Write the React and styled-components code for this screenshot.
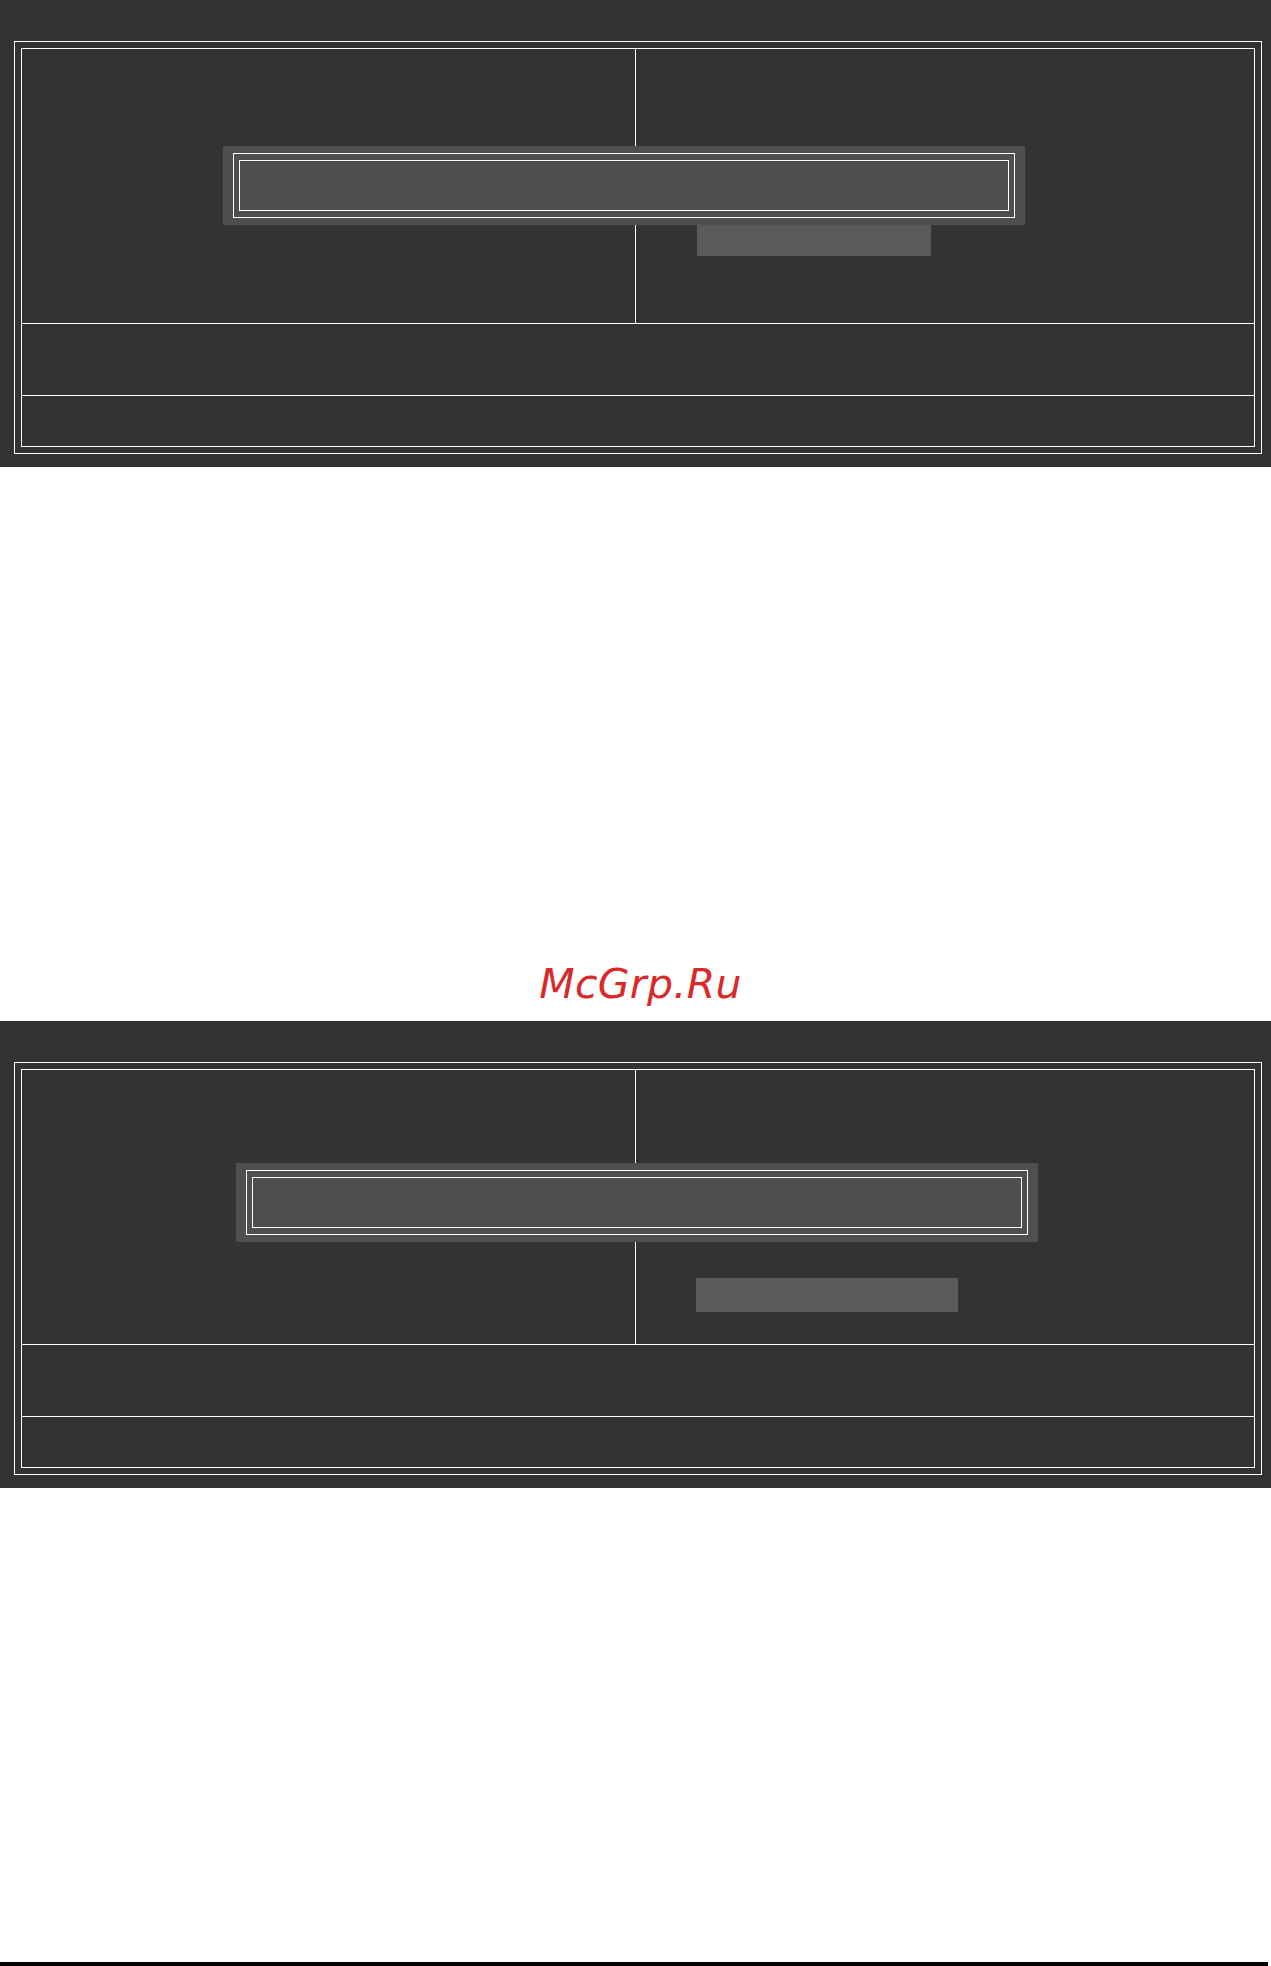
import styled, { createGlobalStyle } from "styled-components";

const Global = createGlobalStyle`
    html, body {
        margin: 0;
        padding: 0;
        background: #ffffff;
    }
    body {
        font-family: "DejaVu Sans", "Liberation Sans", sans-serif;
    }
`

function BiosScreen({ dialogLeft, dialogTop, markLeft, markTop, markWidth, markHeight }) {
    return (
        <Screen>
            <Frame>
                <Inner>
                    <Menu>
                        <Column />
                        <Column right>
                            <Mark $left={markLeft} $top={markTop} $width={markWidth} $height={markHeight} />
                        </Column>
                        <Dialog $left={dialogLeft} $top={dialogTop}>
                            <DialogLine>
                                <DialogField />
                            </DialogLine>
                        </Dialog>
                    </Menu>
                    <Help />
                    <Footer />
                </Inner>
            </Frame>
        </Screen>
    )
}

export default function App() {
    return (
        <>
            <Global />
            <Page>
                <BiosScreen dialogLeft={201} dialogTop={97} markLeft={61} markTop={176} markWidth={234} markHeight={31} />
                <Watermark>
                    <span>McGrp.Ru</span>
                </Watermark>
                <BiosScreen dialogLeft={214} dialogTop={93} markLeft={60} markTop={208} markWidth={262} markHeight={34} />
                <Spacer />
                <Rule />
            </Page>
        </>
    )
}

const Page = styled.div`
    width: 1271px;
    display: flex;
    flex-direction: column;
`

const Screen = styled.div`
    box-sizing: border-box;
    width: 1271px;
    height: 467px;
    background: #333333;
    padding: 41px 9px 13px 14px;
    display: flex;
`

const Frame = styled.div`
    flex: 1;
    border: 1px solid #ffffff;
    padding: 6px;
    display: flex;
`

const Inner = styled.div`
    flex: 1;
    border: 1px solid #ffffff;
    display: flex;
    flex-direction: column;
`

const Menu = styled.div`
    position: relative;
    height: 274px;
    border-bottom: 1px solid #ffffff;
    display: grid;
    grid-template-columns: 614px 1fr;
`

const Column = styled.div`
    border-right: ${(p) => (p.right ? "none" : "1px solid #ffffff")};
    display: flex;
    flex-direction: column;
`

const Mark = styled.div`
    margin-left: ${(p) => p.$left}px;
    margin-top: ${(p) => p.$top}px;
    width: ${(p) => p.$width}px;
    height: ${(p) => p.$height}px;
    background: #5a5a5a;
`

const Dialog = styled.div`
    position: absolute;
    left: ${(p) => p.$left}px;
    top: ${(p) => p.$top}px;
    box-sizing: border-box;
    width: 802px;
    height: 79px;
    background: #4f4f4f;
    padding: 7px 10px;
    display: flex;
`

const DialogLine = styled.div`
    flex: 1;
    border: 1px solid #ffffff;
    padding: 6px 5px 6px 5px;
    display: flex;
`

const DialogField = styled.div`
    flex: 1;
    border: 1px solid #ffffff;
`

const Help = styled.div`
    height: 71px;
    border-bottom: 1px solid #ffffff;
`

const Footer = styled.div`
    flex: 1;
`

const Watermark = styled.div`
    box-sizing: border-box;
    height: 554px;
    display: flex;
    align-items: flex-end;
    justify-content: center;
    padding: 0 0 13px 10px;

    span {
        font-family: "DejaVu Sans", sans-serif;
        font-style: italic;
        font-size: 41px;
        line-height: 47px;
        letter-spacing: 0.3px;
        color: #d92a2a;
    }
`

const Spacer = styled.div`
    height: 474px;
`

const Rule = styled.div`
    height: 4px;
    width: 1268px;
    background: #000000;
`
